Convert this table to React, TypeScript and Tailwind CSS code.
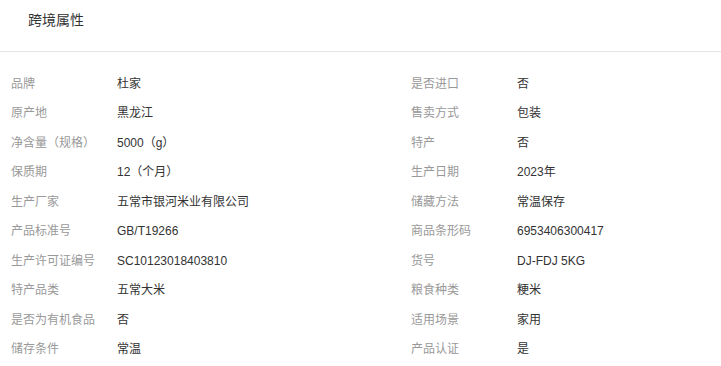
const rows: [string, string, string, string][] = [
  ["品牌", "杜家", "是否进口", "否"],
  ["原产地", "黑龙江", "售卖方式", "包装"],
  ["净含量（规格）", "5000（g）", "特产", "否"],
  ["保质期", "12（个月）", "生产日期", "2023年"],
  ["生产厂家", "五常市银河米业有限公司", "储藏方法", "常温保存"],
  ["产品标准号", "GB/T19266", "商品条形码", "6953406300417"],
  ["生产许可证编号", "SC10123018403810", "货号", "DJ-FDJ 5KG"],
  ["特产品类", "五常大米", "粮食种类", "粳米"],
  ["是否为有机食品", "否", "适用场景", "家用"],
  ["储存条件", "常温", "产品认证", "是"],
]

function Cell({ label, value }: { label: string; value: string }) {
  return (
    <div className="flex h-[29.5px] items-center">
      <span className="w-[106px] shrink-0 text-[#999]">{label}</span>
      <span className="text-[#333]">{value}</span>
    </div>
  )
}

export default function App() {
  return (
    <div className="w-[721px] h-[366px] overflow-hidden bg-white font-['Liberation_Sans','Noto_Sans_CJK_SC',sans-serif]">
      <div className="h-[52px] border-b border-[#e5e5e5] pl-[28px] pt-[10px] text-[14px] leading-[20px] text-[#333]">
        跨境属性
      </div>
      <div className="grid grid-cols-[400px_1fr] pl-[11px] pt-[17px] text-[12px] leading-[16px]">
        {rows.map(([l1, v1, l2, v2]) => (
          <div key={l1} className="contents">
            <Cell label={l1} value={v1} />
            <Cell label={l2} value={v2} />
          </div>
        ))}
      </div>
    </div>
  )
}
